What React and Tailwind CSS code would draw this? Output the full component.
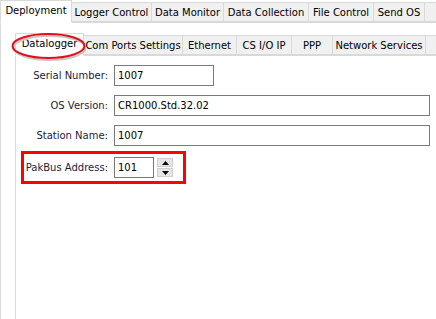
import React from 'react';

const topTabs = [
    { label: 'Deployment', w: 'w-[72px]', active: true },
    { label: 'Logger Control', w: 'w-[81px]' },
    { label: 'Data Monitor', w: 'w-[73px]' },
    { label: 'Data Collection', w: 'w-[86px]' },
    { label: 'File Control', w: 'w-[66px]' },
    { label: 'Send OS', w: 'w-[52px]' },
    { label: '', w: 'w-[20px]' },
];

const subTabs = [
    { label: 'Datalogger', w: 'w-[69px]', active: true },
    { label: 'Com Ports Settings', w: 'w-[100px]' },
    { label: 'Ethernet', w: 'w-[55px]' },
    { label: 'CS I/O IP', w: 'w-[56px]' },
    { label: 'PPP', w: 'w-[42px]' },
    { label: 'Network Services', w: 'w-[94px]' },
    { label: '', w: 'w-[20px]' },
];

const Tab = ({ tab }) => (
    <div
        className={`${tab.w} shrink-0 flex items-center justify-center border border-[#d9d9d9] -ml-px first:ml-0 ${tab.active
            ? 'h-[23px] bg-white border-b-white relative z-10 pb-[2px]'
            : 'h-[20px] bg-[#f0f0f0] mb-px'
            }`}
    >
        {tab.label}
    </div>
);

const Field = ({ label, value, width = 'w-[316px]', labelW = 'w-[92px]' }) => (
    <div className="flex items-center gap-[6px]">
        <span className={`${labelW} text-right text-[#1c1c3c]`}>{label}</span>
        <div className={`${width} h-[21px] border border-[#7a7a7a] bg-white flex items-center px-[3px]`}>
            {value}
        </div>
    </div>
);

const Spinner = () => (
    <div className="flex flex-col gap-px ml-[3px] w-[16px]">
        <div className="h-[9px] bg-[#e6e6e6] border border-[#cfcfcf] flex items-center justify-center">
            <svg width="7" height="4" viewBox="0 0 7 4"><path d="M3.5 0L7 4H0z" fill="#000" /></svg>
        </div>
        <div className="h-[9px] bg-[#e6e6e6] border border-[#cfcfcf] flex items-center justify-center">
            <svg width="7" height="4" viewBox="0 0 7 4"><path d="M0 0h7L3.5 4z" fill="#000" /></svg>
        </div>
    </div>
);

export default function App() {
    return (
        <div className="w-[436px] h-[319px] bg-white overflow-hidden relative text-[10px] text-black font-['DejaVu_Sans',sans-serif]">
            {/* top tabs */}
            <div className="flex items-end h-[23px]">
                {topTabs.map((t, i) => <Tab key={i} tab={t} />)}
            </div>
            <div className="-mt-px border-l border-t border-[#d9d9d9] h-[297px] pl-[14px] pt-[10px]">
                {/* sub tabs */}
                <div className="flex items-end h-[23px]">
                    {subTabs.map((t, i) => <Tab key={i} tab={t} />)}
                </div>
                <div className="-mt-px border-l border-t border-[#d9d9d9] h-[300px] pt-[9px]">
                    <div className="flex flex-col gap-[9px]">
                        <Field label="Serial Number:" value="1007" width="w-[100px]" />
                        <Field label="OS Version:" value="CR1000.Std.32.02" />
                        <Field label="Station Name:" value="1007" />
                    </div>
                    <div className="ml-[5px] mt-[5px] w-[165px] h-[33px] border-[3px] border-[#ff0000] flex items-center">
                        <Field label="PakBus Address:" value="101" width="w-[40px]" labelW="w-[84px]" />
                        <Spinner />
                    </div>
                </div>
            </div>
            {/* annotation ellipse around the Datalogger tab */}
            <svg className="absolute z-20 left-[10px] top-[31px]" width="78" height="31" viewBox="0 0 78 31">
                <ellipse cx="38.5" cy="15" rx="36" ry="12" fill="none" stroke="#c8c8c8" strokeWidth="2" transform="translate(1 2)" />
                <ellipse cx="38.5" cy="15" rx="36" ry="12" fill="none" stroke="#e0101a" strokeWidth="2" />
            </svg>
        </div>
    );
}
